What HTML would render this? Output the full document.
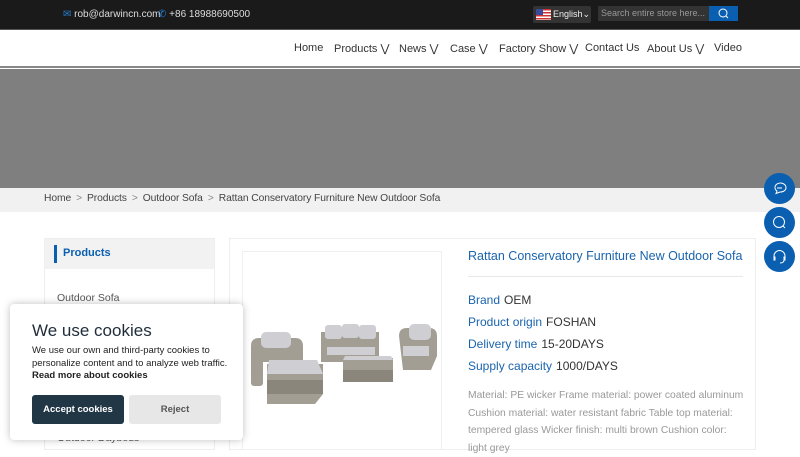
<!DOCTYPE html><html><head><meta charset="utf-8"><style>
*{margin:0;padding:0;box-sizing:border-box}
body{width:800px;height:450px;overflow:hidden;font-family:"Liberation Sans",sans-serif;background:#fff;position:relative}
.top{position:absolute;left:0;top:0;width:800px;height:30px;background:#1a1a1a;border-bottom:1px solid #555}
.top .c{position:absolute;top:9px;font-size:10px;color:#ddd}
.lang{position:absolute;left:533px;top:6px;width:58px;height:17px;background:#333;border-radius:2px;font-size:9px;color:#eee;padding:3px 0 0 20px}
.flag{position:absolute;left:3px;top:3px;width:15px;height:11px;background:repeating-linear-gradient(#c33 0 1.5px,#fff 1.5px 3px)}
.flag:before{content:"";position:absolute;left:0;top:0;width:7px;height:6px;background:#3a4a9a}
.srch{position:absolute;left:598px;top:6px;width:112px;height:15px;background:#333;font-size:9px;color:#999;padding:2px 3px}
.sbtn{position:absolute;left:709px;top:6px;width:29px;height:15px;background:#0a5fb0}
.nav{position:absolute;top:31px;left:0;width:800px;height:37px;border-bottom:2px solid #888;background:#fff}
.nav span{position:absolute;top:11px;font-size:11px;color:#333}
.ban{position:absolute;top:69px;left:0;width:800px;height:119px;background:#7f7f7f}
.bc{position:absolute;top:188px;left:0;width:800px;height:24px;background:#f1f1f1;font-size:10.3px;color:#444;padding:5px 0 0 44px;letter-spacing:-0.1px}
.bc i{font-style:normal;color:#888;margin:0 5px}
.side{position:absolute;left:44px;top:238px;width:171px;height:212px;border:1px solid #eee}
.side .h{height:30px;background:#f2f2f2;color:#0a5fb0;font-weight:bold;font-size:11px;padding:8px 0 0 18px;position:relative}
.side .h:before{content:"";position:absolute;left:9px;top:6px;width:3px;height:18px;background:#0a5fb0}
.main{position:absolute;left:229px;top:238px;width:527px;height:212px;border:1px solid #eee}
.img{position:absolute;left:242px;top:251px;width:200px;height:199px;border:1px solid #f0f0f0;background:#fff}
.t{position:absolute;left:468px;top:249px;font-size:12.5px;color:#1a64ad}
.hr{position:absolute;left:468px;top:276px;width:275px;height:1px;background:#e8e8e8}
.p{position:absolute;left:468px;font-size:12px;color:#1a64ad}
.p b{font-weight:normal;color:#333;margin-left:4px}
.d{position:absolute;left:468px;top:387px;width:280px;font-size:10.3px;line-height:17.5px;color:#999}
.fb{position:absolute;left:764px;width:31px;height:31px;border-radius:50%;background:#0a5fb0}
.ck{position:absolute;left:10px;top:304px;width:233px;height:136px;background:#fff;border-radius:4px;box-shadow:0 0 8px rgba(0,0,0,.25)}
.ck h2{position:absolute;left:22px;top:17px;font-size:17px;font-weight:normal;color:#1f2d3a}
.ck p{position:absolute;left:22px;top:41px;font-size:9.5px;line-height:12.5px;color:#222;width:210px}
.acc{position:absolute;left:22px;top:91px;width:92px;height:29px;background:#213746;border-radius:3px;color:#fff;font-weight:bold;font-size:9.5px;text-align:center;line-height:29px}
.rej{position:absolute;left:119px;top:91px;width:92px;height:29px;background:#e7e7e7;border-radius:3px;color:#555;font-weight:bold;font-size:9.5px;text-align:center;line-height:29px}
</style></head><body>
<div class="top">
<div class="c" style="left:63px"><span style="color:#2a7fd4">✉</span> rob@darwincn.com</div>
<div class="c" style="left:158px"><span style="color:#2a7fd4">✆</span> +86 18988690500</div>
<div class="lang"><div class="flag"></div>English⌄</div>
<div class="srch">Search entire store here...</div>
<div class="sbtn"><svg width="29" height="15"><circle cx="14" cy="7" r="4" fill="none" stroke="#fff" stroke-width="1"/><line x1="17" y1="10" x2="19" y2="12" stroke="#fff"/></svg></div>
</div>
<div class="nav">
<span style="left:294px">Home</span><span style="left:334px">Products ⋁</span><span style="left:399px">News ⋁</span><span style="left:450px">Case ⋁</span><span style="left:499px">Factory Show ⋁</span><span style="left:585px">Contact Us</span><span style="left:647px">About Us ⋁</span><span style="left:714px">Video</span>
</div>
<div class="ban"></div>
<div class="bc">Home<i>&gt;</i>Products<i>&gt;</i>Outdoor Sofa<i>&gt;</i>Rattan Conservatory Furniture New Outdoor Sofa</div>
<div class="side"><div class="h">Products</div><div style="font-size:10.5px;color:#555;padding:23px 0 0 12px">Outdoor Sofa</div></div>
<div class="main"></div>
<div class="img"><svg width="200" height="199">
<g fill="#a29e93"><path d="M8 94q0-8 8-8h36q8 0 8 8v16h-52z"/><rect x="8" y="96" width="12" height="38" rx="3"/><path d="M78 82h56v28h-56z"/><rect x="78" y="80" width="6" height="30"/><rect x="130" y="80" width="6" height="30"/><path d="M100 106h50v24h-50z"/><path d="M156 84q0-8 8-8h22q8 0 8 8v20l-6 14h-28z"/><path d="M24 112h56v30l-8 10h-48z"/></g>
<g fill="#8a867c"><rect x="24" y="128" width="56" height="14"/><rect x="100" y="118" width="50" height="12"/></g>
<g fill="#cfced3"><rect x="18" y="80" width="30" height="16" rx="5"/><rect x="82" y="73" width="17" height="14" rx="3"/><rect x="99" y="72" width="17" height="14" rx="3"/><rect x="116" y="73" width="17" height="14" rx="3"/><rect x="84" y="95" width="48" height="8"/><rect x="166" y="72" width="22" height="16" rx="5"/><rect x="160" y="94" width="26" height="10"/><path d="M26 108h48l6 14h-56z"/><path d="M102 104h46l2 4h-50z"/></g>
</svg></div>
<div class="t">Rattan Conservatory Furniture New Outdoor Sofa</div>
<div class="hr"></div>
<div class="p" style="top:293px">Brand<b>OEM</b></div>
<div class="p" style="top:315px">Product origin<b>FOSHAN</b></div>
<div class="p" style="top:337px">Delivery time<b>15-20DAYS</b></div>
<div class="p" style="top:359px">Supply capacity<b>1000/DAYS</b></div>
<div class="d">Material: PE wicker Frame material: power coated aluminum Cushion material: water resistant fabric Table top material: tempered glass Wicker finish: multi brown Cushion color: light grey</div>
<div class="fb" style="top:173px"><svg width="31" height="31"><path d="M12 20.5l1-2.5a5.5 4.5 0 1 1 3 1z" fill="none" stroke="#fff"/><line x1="13" y1="15" x2="18" y2="15" stroke="#fff"/></svg></div>
<div class="fb" style="top:207px"><svg width="31" height="31"><circle cx="15" cy="15" r="5.5" fill="none" stroke="#fff"/><line x1="19" y1="19" x2="21" y2="21" stroke="#fff"/></svg></div>
<div class="fb" style="top:241px"><svg width="31" height="31"><path d="M10 17v-2a5.5 5.5 0 0 1 11 0v2M10 16h1v3h-1zM20 16h1v3h-1zM20 19q0 3-4 3" fill="none" stroke="#fff"/></svg></div>
<div style="position:absolute;left:57px;top:432px;font-size:10.5px;color:#555">Outdoor Daybeds</div>
<div class="ck"><h2>We use cookies</h2><p>We use our own and third-party cookies to personalize content and to analyze web traffic.<br><b>Read more about cookies</b></p><div class="acc">Accept cookies</div><div class="rej">Reject</div></div>
</body></html>
